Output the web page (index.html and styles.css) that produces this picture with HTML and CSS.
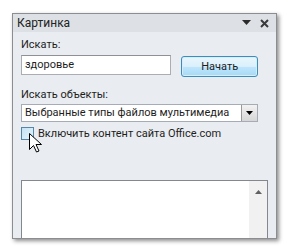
FILE: index.html
```html
<!DOCTYPE html>
<html lang="ru">
    <head>
        <meta charset="UTF-8" />
        <title>Картинка</title>
        <link rel="stylesheet" href="styles.css">
    </head>
    <body>
        <div class="pane">
            <div class="pane-title">
                <span>Картинка</span>
                <span class="pane-tools">
                    <svg width="9" height="6" viewBox="0 0 9 6"><path d="M0 0h9L4.5 5z" fill="#2b2b2b"/></svg>
                    <svg width="9" height="9" viewBox="0 0 9 9"><path d="M1 1l7 7M8 1L1 8" stroke="#3a3a3a" stroke-width="2"/></svg>
                </span>
            </div>

            <div class="pane-body">
                <div class="label">Искать:</div>
                <div class="search-row">
                    <div class="text-input">здоровье</div>
                    <button class="btn">Начать</button>
                </div>

                <div class="label label-gap">Искать объекты:</div>
                <div class="select">
                    <span class="select-value">Выбранные типы файлов мультимедиа</span>
                    <span class="select-arrow">
                        <svg width="7" height="4" viewBox="0 0 7 4"><path d="M0 0h7L3.5 4z" fill="#000"/></svg>
                    </span>
                </div>

                <label class="check-row">
                    <span class="checkbox"></span>
                    <span>Включить контент сайта Office.com</span>
                </label>

                <div class="results">
                    <div class="scrollbar">
                        <svg width="7" height="4" viewBox="0 0 7 4"><path d="M3.5 0L7 4H0z" fill="#606060"/></svg>
                    </div>
                </div>
            </div>
        </div>

        <svg class="cursor" width="13" height="21" viewBox="0 0 13 21">
            <path d="M0.5 0.5v16l4-4 3 6.5 2.5-1-3-6.5h5.5z" fill="#fff" stroke="#000" stroke-width="1" stroke-linejoin="round"/>
        </svg>
    </body>
</html>
```

FILE: styles.css
```css
body {
    margin: 0;
    background: #fff;
    font-family: Roboto, 'Liberation Sans', sans-serif;
    font-size: 11px;
    color: #1e1e1e;
    position: relative;
    height: 248px;
    overflow: hidden;
    white-space: nowrap;
}
.pane {
    margin: 13px 0 0 12px;
    width: 263px;
    height: 224px;
    border: 1px solid #8c8d90;
    background: #e9ecf0;
    box-shadow: 2px 2px 4px rgba(0, 0, 0, 0.45);
    overflow: hidden;
}
.pane-title {
    height: 18px;
    background: #dde1e6;
    display: flex;
    align-items: center;
    justify-content: space-between;
    padding: 0 7px 0 4px;
    font-size: 12px;
    color: #222;
}
.pane-tools {
    display: flex;
    align-items: center;
    gap: 9px;
}
.pane-body {
    padding: 5px 18px 0 8px;
}
.label {
    line-height: 15px;
    height: 15px;
}
.label-gap {
    margin-top: 10px;
}
.search-row {
    display: flex;
    gap: 10px;
    margin-top: 3px;
}
.text-input {
    width: 146px;
    height: 18px;
    border: 1px solid #abadb3;
    border-top-color: #8e9096;
    background: #fff;
    padding-left: 3px;
    line-height: 18px;
}
.btn {
    width: 77px;
    height: 21px;
    margin-top: 1px;
    padding: 0;
    border: 1px solid #3c8dbb;
    border-radius: 3px;
    background: linear-gradient(#eaf6fd, #d9f0fc 50%, #bee6fd 51%, #a7d9f5);
    box-shadow: inset 0 0 0 1px #d4eefa;
    font-family: inherit;
    font-size: 11px;
    color: #1e1e1e;
}
.select {
    display: flex;
    height: 16px;
    margin-top: 2px;
    border: 1px solid #a5acb5;
    background: #fff;
}
.select-value {
    flex: 1;
    min-width: 0;
    overflow: hidden;
    padding-left: 3px;
    line-height: 16px;
}
.select-arrow {
    flex-shrink: 0;
    width: 15px;
    background: linear-gradient(#f2f2f2, #d6d6d6);
    border-left: 1px solid #9a9a9a;
    display: flex;
    align-items: center;
    justify-content: center;
}
.check-row {
    display: flex;
    align-items: center;
    gap: 4px;
    margin-top: 4px;
    height: 14px;
}
.checkbox {
    width: 11px;
    height: 11px;
    border: 1px solid #5586a3;
    background: linear-gradient(135deg, #c5e3f5, #e4f3fb);
}
.results {
    margin-top: 40px;
    width: 245px;
    height: 70px;
    border: 1px solid #828790;
    background: #fff;
    display: flex;
    justify-content: flex-end;
}
.scrollbar {
    width: 18px;
    background: #f1f1f1;
    display: flex;
    justify-content: center;
    padding-top: 9px;
    box-sizing: border-box;
}
.cursor {
    position: absolute;
    left: 29px;
    top: 133px;
}
```
